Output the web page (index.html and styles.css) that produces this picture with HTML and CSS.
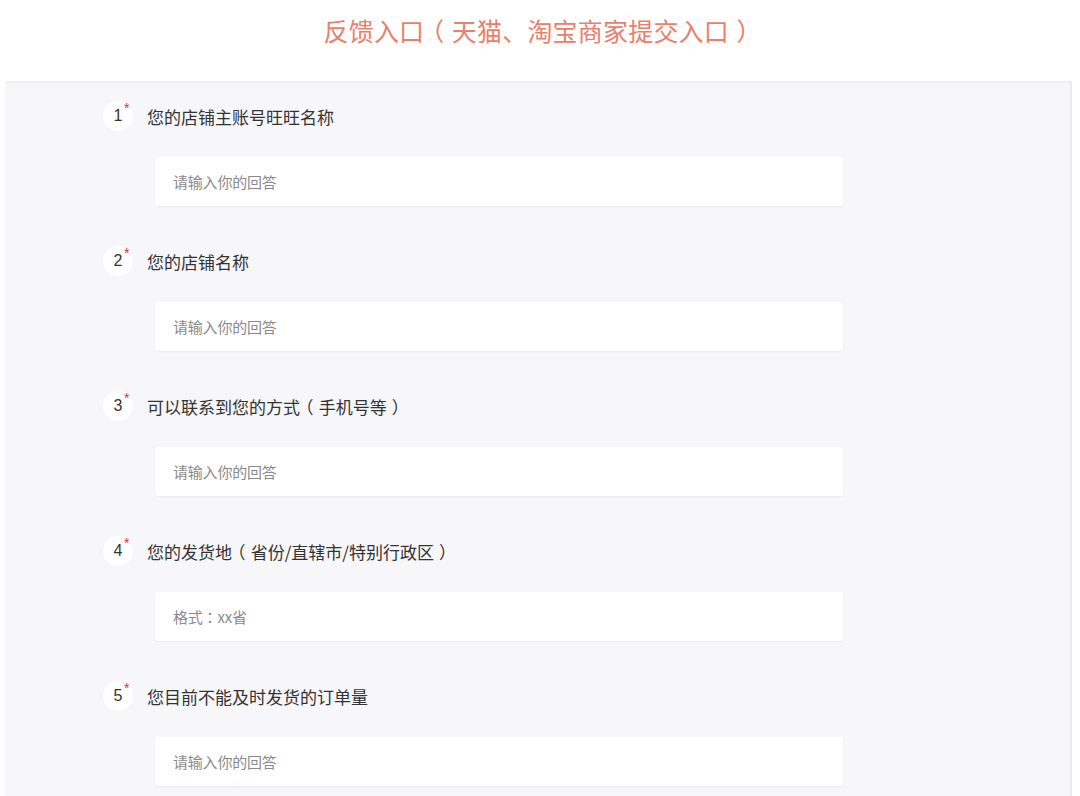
FILE: index.html
```html
<!DOCTYPE html>
<html lang="zh">
<head>
<meta charset="utf-8">
<link rel="stylesheet" href="styles.css">
</head>
<body>
<h1 class="title">反馈入口<span class="p">（</span>天猫、淘宝商家提交入口<span class="p">）</span></h1>
<div class="panel">
  <div class="item">
    <div class="q"><span class="num">1<i class="req">*</i></span><span class="label">您的店铺主账号旺旺名称</span></div>
    <div class="input">请输入你的回答</div>
  </div>
  <div class="item">
    <div class="q"><span class="num">2<i class="req">*</i></span><span class="label">您的店铺名称</span></div>
    <div class="input">请输入你的回答</div>
  </div>
  <div class="item">
    <div class="q"><span class="num">3<i class="req">*</i></span><span class="label">可以联系到您的方式<span class="p">（</span>手机号等<span class="p">）</span></span></div>
    <div class="input">请输入你的回答</div>
  </div>
  <div class="item">
    <div class="q"><span class="num">4<i class="req">*</i></span><span class="label">您的发货地<span class="p">（</span>省份/直辖市/特别行政区<span class="p">）</span></span></div>
    <div class="input">格式<span class="c">：</span>xx省</div>
  </div>
  <div class="item">
    <div class="q"><span class="num">5<i class="req">*</i></span><span class="label">您目前不能及时发货的订单量</span></div>
    <div class="input">请输入你的回答</div>
  </div>
</div>
</body>
</html>
```
FILE: styles.css
```css
html, body {
  margin: 0;
  padding: 0;
  background: #ffffff;
  font-family: "Noto Sans CJK SC", "Noto Sans", sans-serif;
  overflow: hidden;
}
.p {
  display: inline-block;
  width: 1.1em;
  text-align: center;
  font-feature-settings: "halt" 1;
}
.c {
  font-family: "Noto Sans CJK TC", "Noto Sans CJK SC", sans-serif;
}
.title {
  margin: 0;
  height: 81px;
  line-height: 60px;
  text-align: center;
  font-size: 25px;
  font-weight: normal;
  color: #e9806b;
  letter-spacing: 0.2px;
}
.panel {
  margin: 0 8px 0 5px;
  background: #f7f6f9;
  border-top: 2px solid #efeff1;
  border-right: 2px solid #ececee;
  padding: 18px 0 0 98px;
  height: 800px;
}
.item {
  margin-bottom: 40px;
}
.q {
  display: flex;
  align-items: center;
  height: 30px;
  margin-bottom: 26px;
}
.num {
  position: relative;
  width: 30px;
  height: 30px;
  border-radius: 50%;
  background: #ffffff;
  display: flex;
  align-items: center;
  justify-content: center;
  font-size: 16px;
  color: #333;
  font-family: "Liberation Sans", Arial, sans-serif;
}
.req {
  position: absolute;
  top: -1px;
  left: 21px;
  font-style: normal;
  color: #e0303a;
  font-size: 14px;
}
.label {
  margin-left: 14px;
  font-size: 17px;
  color: #333;
  letter-spacing: 0;
}
.input {
  margin-left: 52px;
  width: 688px;
  height: 49px;
  box-sizing: border-box;
  background: #fff;
  border-radius: 3px;
  box-shadow: 0 1px 2px rgba(0,0,0,0.05);
  padding-left: 18px;
  display: flex;
  align-items: center;
  font-size: 15px;
  color: #8a8a8a;
  letter-spacing: -0.2px;
}
```
